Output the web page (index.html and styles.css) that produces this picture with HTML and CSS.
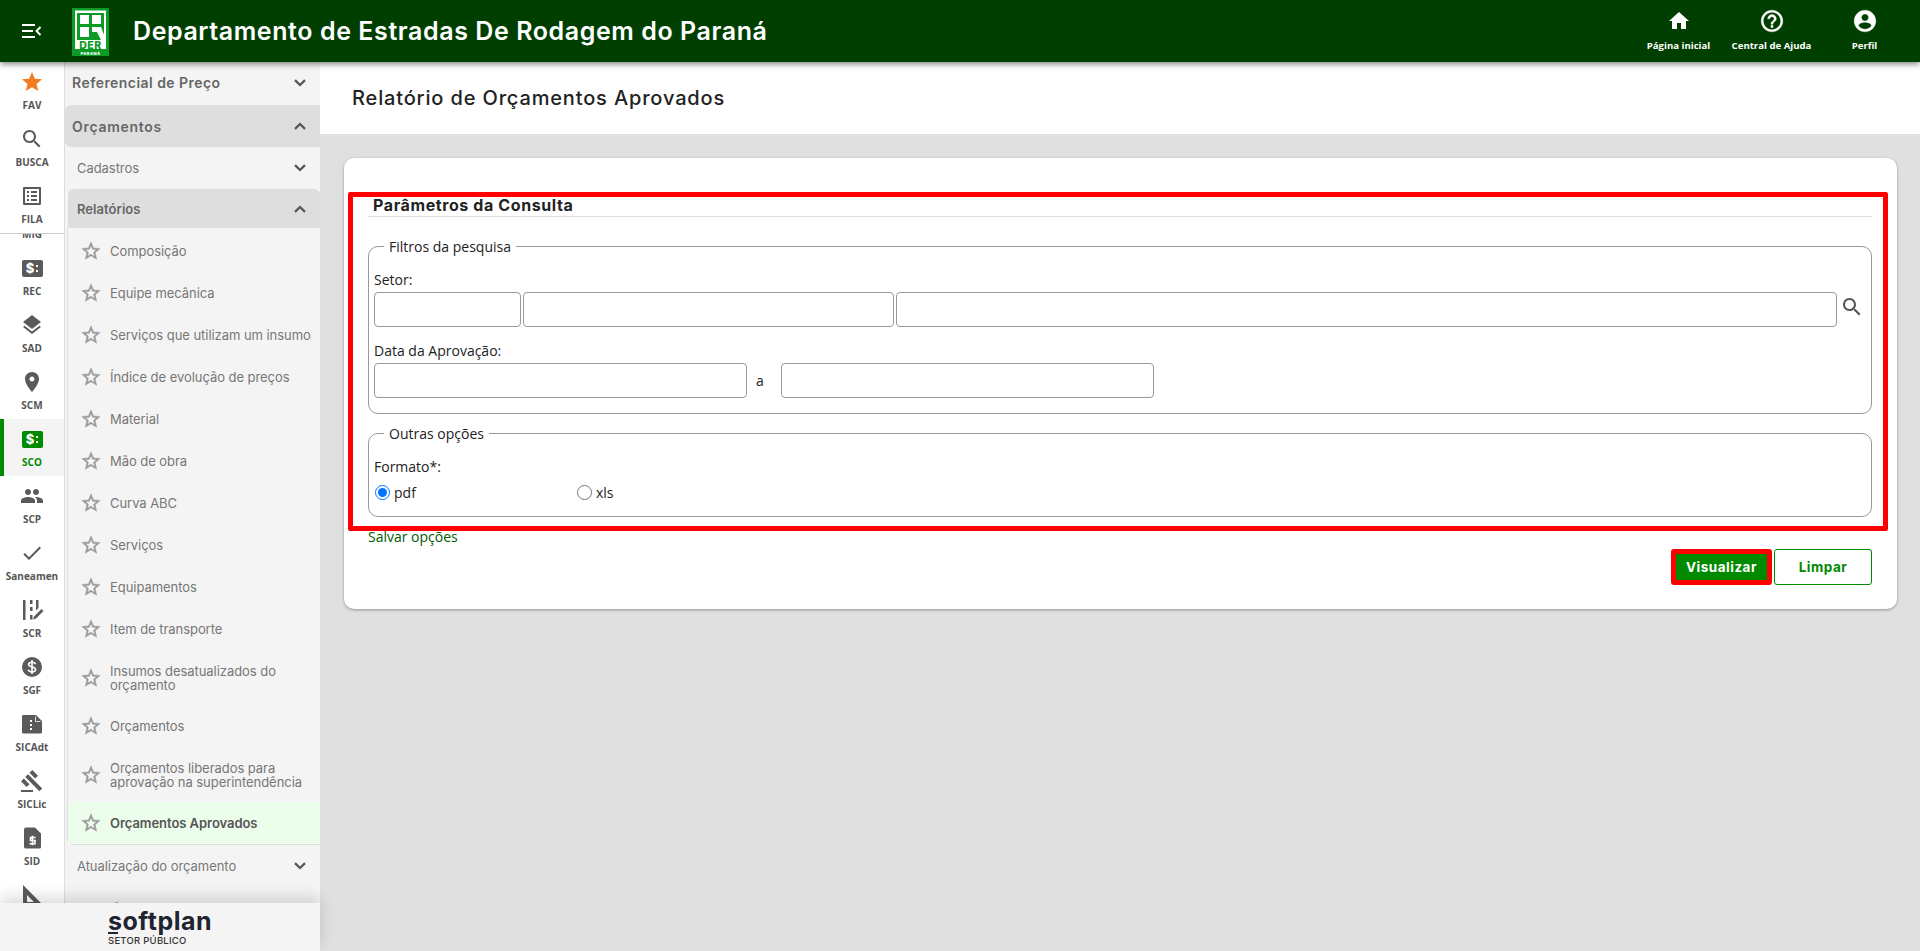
FILE: index.html
```html
<!DOCTYPE html>
<html lang="pt-BR">
<head>
<meta charset="utf-8">
<title>Relatório de Orçamentos Aprovados</title>
<link rel="stylesheet" href="styles.css">
</head>
<body>
<svg class="defs" width="0" height="0" aria-hidden="true">
  <symbol id="i-star" viewBox="0 0 24 24"><path d="M12 17.27L18.18 21l-1.64-7.03L22 9.24l-7.19-.61L12 2 9.19 8.63 2 9.24l5.46 4.73L5.82 21z"/></symbol>
  <symbol id="i-star-o" viewBox="0 0 24 24"><path d="M12,15.39L8.24,17.66L9.23,13.38L5.91,10.5L10.29,10.13L12,6.09L13.71,10.13L18.09,10.5L14.77,13.38L15.76,17.66M22,9.24L14.81,8.63L12,2L9.19,8.63L2,9.24L7.45,13.97L5.82,21L12,17.27L18.18,21L16.54,13.97L22,9.24Z"/></symbol>
  <symbol id="i-search" viewBox="0 0 24 24"><path d="M15.5 14h-.79l-.28-.27C15.41 12.59 16 11.11 16 9.5 16 5.91 13.09 3 9.5 3S3 5.91 3 9.5 5.91 16 9.5 16c1.61 0 3.09-.59 4.23-1.57l.27.28v.79l5 4.99L20.49 19l-4.99-5zm-6 0C7.01 14 5 11.99 5 9.5S7.01 5 9.5 5 14 7.01 14 9.5 11.99 14 9.5 14z"/></symbol>
  <symbol id="i-list" viewBox="0 0 24 24"><path d="M19 5v14H5V5h14m1.1-2H3.9c-.5 0-.9.4-.9.9v16.2c0 .4.4.9.9.9h16.2c.4 0 .9-.5.9-.9V3.9c0-.5-.5-.9-.9-.9zM11 7h6v2h-6V7zm0 4h6v2h-6v-2zm0 4h6v2h-6zM7 7h2v2H7zm0 4h2v2H7zm0 4h2v2H7z"/></symbol>
  <symbol id="i-layers" viewBox="0 0 24 24"><path d="M11.99 18.54l-7.37-5.73L3 14.07l9 7 9-7-1.63-1.27-7.38 5.74zM12 16l7.36-5.73L21 9l-9-7-9 7 1.63 1.27L12 16z"/></symbol>
  <symbol id="i-place" viewBox="0 0 24 24"><path d="M12 2C8.13 2 5 5.13 5 9c0 5.25 7 13 7 13s7-7.75 7-13c0-3.87-3.13-7-7-7zm0 9.5c-1.38 0-2.5-1.12-2.5-2.5s1.12-2.5 2.5-2.5 2.5 1.12 2.5 2.5-1.12 2.5-2.5 2.5z"/></symbol>
  <symbol id="i-people" viewBox="0 0 24 24"><path d="M16 11c1.66 0 2.99-1.34 2.99-3S17.66 5 16 5c-1.66 0-3 1.34-3 3s1.34 3 3 3zm-8 0c1.66 0 2.99-1.34 2.99-3S9.66 5 8 5C6.34 5 5 6.34 5 8s1.34 3 3 3zm0 2c-2.33 0-7 1.17-7 3.5V19h14v-2.5c0-2.33-4.67-3.5-7-3.5zm8 0c-.29 0-.62.02-.97.05 1.16.84 1.97 1.97 1.97 3.45V19h6v-2.5c0-2.33-4.67-3.5-7-3.5z"/></symbol>
  <symbol id="i-check" viewBox="0 0 24 24"><path d="M9 16.17L4.83 12l-1.42 1.41L9 19 21 7l-1.41-1.41z"/></symbol>
  <symbol id="i-money" viewBox="0 0 24 24"><circle cx="12" cy="12" r="10"/><path d="M15.500 9.200c-.3-1.200-1.500-1.900-3.500-1.900-2 0-3.400.9-3.400 2.300 0 3.200 7 1.600 7 4.900 0 1.400-1.500 2.300-3.600 2.300-2.200 0-3.500-.8-3.800-2.200M12 5v14" fill="none" stroke="#fff" stroke-width="1.600"/></symbol>
  <symbol id="i-gavel" viewBox="0 0 24 24"><path d="M1 21h12v2H1zM5.245 8.07l2.83-2.827 14.14 14.142-2.828 2.828zM12.317 1l5.657 5.656-2.83 2.83-5.654-5.66zM3.825 9.485l5.657 5.657-2.828 2.828-5.657-5.657z"/></symbol>
  <symbol id="i-doc-h" viewBox="0 0 24 24"><path fill-rule="evenodd" d="M4 3h12l6 6v11a1.500 1.500 0 0 1-1.500 1.500h-17A1.500 1.500 0 0 1 2 20V4.500A1.500 1.500 0 0 1 4 3zM10 8v2h2V8zm0 4v2h2v-2zm0 4v2h2v-2z"/><path d="M15.500 4.500v5h5" fill="none" stroke="#fff" stroke-width=".8"/></symbol>
  <symbol id="i-doc-s" viewBox="0 0 24 24"><path d="M6 1.500h9l6 6V21a1.500 1.500 0 0 1-1.500 1.500H6A2 2 0 0 1 4 21V3.500a2 2 0 0 1 2-2z"/><path d="M15.500 11.500h-5v3h4.500v3.300H9.500M12.500 9.800v9.500" fill="none" stroke="#fff" stroke-width="1.600"/></symbol>
  <symbol id="i-ruler" viewBox="0 0 24 24"><path fill-rule="evenodd" d="M3 2l19 19v2H3zM7 12v7h7z"/></symbol>
  <symbol id="i-scr" viewBox="0 0 24 24"><path d="M3 2h2.500v20H3zM10 2h2.500v4H10zM10 9h2.500v4H10zM10 17h2.500v4.500H10zM16 2h2.500v8L16 12.500zM21.500 11l2 2-7.500 7.500-3 1 1-3z"/></symbol>
  <symbol id="i-home" viewBox="0 0 24 24"><path d="M10 20v-6h4v6h5v-8h3L12 3 2 12h3v8z"/></symbol>
  <symbol id="i-help" viewBox="0 0 24 24"><path d="M11 18h2v-2h-2v2zm1-16C6.480 2 2 6.480 2 12s4.480 10 10 10 10-4.480 10-10S17.520 2 12 2zm0 18c-4.410 0-8-3.590-8-8s3.590-8 8-8 8 3.590 8 8-3.590 8-8 8zm0-14c-2.210 0-4 1.790-4 4h2c0-1.100.9-2 2-2s2 .9 2 2c0 2-3 1.750-3 5h2c0-2.250 3-2.500 3-5 0-2.210-1.790-4-4-4z"/></symbol>
  <symbol id="i-user" viewBox="0 0 24 24"><path d="M12 2C6.480 2 2 6.480 2 12s4.480 10 10 10 10-4.480 10-10S17.520 2 12 2zm0 3.500c1.900 0 3.300 1.500 3.300 3.300S13.900 12.100 12 12.100 8.700 10.600 8.700 8.800 10.100 5.500 12 5.500zm0 14c-2.500 0-4.710-1.280-6-3.220.03-1.990 4-3.080 6-3.080 1.990 0 5.970 1.090 6 3.080-1.290 1.940-3.500 3.220-6 3.220z"/></symbol>
  <symbol id="i-down" viewBox="0 0 12 8"><path d="M1 1.200l5 4.800 5-4.800" fill="none" stroke="currentColor" stroke-width="2.300"/></symbol>
  <symbol id="i-up" viewBox="0 0 12 8"><path d="M1 6.800l5-4.800 5 4.800" fill="none" stroke="currentColor" stroke-width="2.300"/></symbol>
</svg>

<header class="topbar">
  <button class="menu-btn" type="button" aria-label="Menu">
    <svg width="20" height="14" viewBox="0 0 20 14"><path d="M0 1h13M0 7h11M0 13h13" stroke="#fff" stroke-width="2" fill="none"/><path d="M18.500 3l-4 4 4 4" stroke="#fff" stroke-width="2" fill="none"/></svg>
  </button>
  <svg class="logo" width="37" height="48" viewBox="0 0 37 48" role="img" aria-label="DER Paraná">
    <rect width="37" height="48" fill="#0d9a25"/>
    <rect x="3" y="2.500" width="31" height="30" fill="#fff"/>
    <rect x="5" y="5" width="27" height="27" fill="#0d9a25"/>
    <rect x="8" y="7" width="9" height="9" fill="#fff"/>
    <rect x="20" y="7" width="9" height="9" fill="#fff"/>
    <rect x="8" y="19" width="9" height="10" fill="#fff"/>
    <path d="M20 19h9l5 13h-5l-4-8h-5z" fill="#fff"/>
    <rect x="3" y="32" width="31" height="9" fill="#fff"/>
    <text x="18.500" y="40.500" class="logo-der">DER</text>
    <text x="18.500" y="46.500" class="logo-pr">PARANÁ</text>
  </svg>
  <h1 class="app-title">Departamento de Estradas De Rodagem do Paraná</h1>
  <nav class="top-links">
    <a class="top-link"><svg class="top-ico"><use href="#i-home"/></svg><span>Página inicial</span></a>
    <a class="top-link"><svg class="top-ico top-ico-lg"><use href="#i-help"/></svg><span>Central de Ajuda</span></a>
    <a class="top-link"><svg class="top-ico top-ico-lg"><use href="#i-user"/></svg><span>Perfil</span></a>
  </nav>
</header>

<div class="shell">
  <aside class="rail">
    <div class="rail-fixed">
      <a class="rail-item"><svg class="rail-ico star-fav"><use href="#i-star"/></svg><span>FAV</span></a>
      <a class="rail-item"><svg class="rail-ico"><use href="#i-search"/></svg><span>BUSCA</span></a>
      <a class="rail-item"><svg class="rail-ico"><use href="#i-list"/></svg><span>FILA</span></a>
    </div>
    <div class="rail-scroll">
      <a class="rail-item rail-peek"><span class="rail-gap"></span><span>MIG</span></a>
      <a class="rail-item"><span class="money-ico"><b>$</b><i></i></span><span>REC</span></a>
      <a class="rail-item"><svg class="rail-ico"><use href="#i-layers"/></svg><span>SAD</span></a>
      <a class="rail-item"><svg class="rail-ico"><use href="#i-place"/></svg><span>SCM</span></a>
      <a class="rail-item is-active"><span class="money-ico"><b>$</b><i></i></span><span>SCO</span></a>
      <a class="rail-item"><svg class="rail-ico"><use href="#i-people"/></svg><span>SCP</span></a>
      <a class="rail-item"><svg class="rail-ico"><use href="#i-check"/></svg><span>Saneamen</span></a>
      <a class="rail-item"><svg class="rail-ico"><use href="#i-scr"/></svg><span>SCR</span></a>
      <a class="rail-item"><svg class="rail-ico"><use href="#i-money"/></svg><span>SGF</span></a>
      <a class="rail-item"><svg class="rail-ico"><use href="#i-doc-h"/></svg><span>SICAdt</span></a>
      <a class="rail-item"><svg class="rail-ico"><use href="#i-gavel"/></svg><span>SICLic</span></a>
      <a class="rail-item"><svg class="rail-ico"><use href="#i-doc-s"/></svg><span>SID</span></a>
      <a class="rail-item"><svg class="rail-ico"><use href="#i-ruler"/></svg><span>SIE</span></a>
    </div>
  </aside>

  <nav class="side">
    <div class="side-head side-first"><span>Referencial de Preço</span><svg class="chev"><use href="#i-down"/></svg></div>
    <div class="side-head is-open"><span>Orçamentos</span><svg class="chev"><use href="#i-up"/></svg></div>
    <div class="side-sub"><span>Cadastros</span><svg class="chev"><use href="#i-down"/></svg></div>
    <div class="side-sub is-open"><span>Relatórios</span><svg class="chev"><use href="#i-up"/></svg></div>
    <ul class="side-list">
      <li class="side-link"><svg class="star-o"><use href="#i-star-o"/></svg><span>Composição</span></li>
      <li class="side-link"><svg class="star-o"><use href="#i-star-o"/></svg><span>Equipe mecânica</span></li>
      <li class="side-link"><svg class="star-o"><use href="#i-star-o"/></svg><span>Serviços que utilizam um insumo</span></li>
      <li class="side-link"><svg class="star-o"><use href="#i-star-o"/></svg><span>Índice de evolução de preços</span></li>
      <li class="side-link"><svg class="star-o"><use href="#i-star-o"/></svg><span>Material</span></li>
      <li class="side-link"><svg class="star-o"><use href="#i-star-o"/></svg><span>Mão de obra</span></li>
      <li class="side-link"><svg class="star-o"><use href="#i-star-o"/></svg><span>Curva ABC</span></li>
      <li class="side-link"><svg class="star-o"><use href="#i-star-o"/></svg><span>Serviços</span></li>
      <li class="side-link"><svg class="star-o"><use href="#i-star-o"/></svg><span>Equipamentos</span></li>
      <li class="side-link"><svg class="star-o"><use href="#i-star-o"/></svg><span>Item de transporte</span></li>
      <li class="side-link is-double"><svg class="star-o"><use href="#i-star-o"/></svg><span>Insumos desatualizados do<br>orçamento</span></li>
      <li class="side-link"><svg class="star-o"><use href="#i-star-o"/></svg><span>Orçamentos</span></li>
      <li class="side-link is-double"><svg class="star-o"><use href="#i-star-o"/></svg><span>Orçamentos liberados para<br>aprovação na superintendência</span></li>
      <li class="side-link is-current"><svg class="star-o"><use href="#i-star-o"/></svg><span>Orçamentos Aprovados</span></li>
    </ul>
    <div class="side-sub"><span>Atualização do orçamento</span><svg class="chev"><use href="#i-down"/></svg></div>
    <div class="side-sub"><span>Cotação</span></div>
  </nav>

  <main class="main">
    <div class="page-head"><h2 class="page-title">Relatório de Orçamentos Aprovados</h2></div>
    <div class="page-body">
      <section class="card">
        <div class="highlight">
          <h3 class="section-title">Parâmetros da Consulta</h3>
          <fieldset class="group group-first">
            <legend>Filtros da pesquisa</legend>
            <label class="field-label">Setor:</label>
            <div class="input-row">
              <input class="input input-code" type="text">
              <input class="input input-mid" type="text">
              <input class="input input-wide" type="text">
              <svg class="lookup"><use href="#i-search"/></svg>
            </div>
            <label class="field-label field-next">Data da Aprovação:</label>
            <div class="input-row">
              <input class="input input-date" type="text">
              <span class="range-sep">a</span>
              <input class="input input-date" type="text">
            </div>
          </fieldset>
          <fieldset class="group group-second">
            <legend>Outras opções</legend>
            <label class="field-label">Formato*:</label>
            <div class="radio-row">
              <label class="radio radio-pdf"><input type="radio" name="fmt" checked><span>pdf</span></label>
              <label class="radio"><input type="radio" name="fmt"><span>xls</span></label>
            </div>
          </fieldset>
        </div>
        <a class="save-link">Salvar opções</a>
        <div class="actions">
          <button class="btn btn-primary" type="button">Visualizar</button>
          <button class="btn btn-ghost" type="button">Limpar</button>
        </div>
      </section>
    </div>
  </main>
</div>

<footer class="brand">
  <div class="brand-name">softplan</div>
  <div class="brand-sub">SETOR PÚBLICO</div>
</footer>
</body>
</html>
```

FILE: styles.css
```css
* { box-sizing: border-box; }
html, body { margin: 0; height: 951px; overflow: hidden; }
body { font-family: "Open Sans", "Liberation Sans", sans-serif; background: #e0e0e0; color: #222; position: relative; display: flex; flex-direction: column; }
.defs { position: absolute; }
h1, h2, h3 { margin: 0; }

.topbar { height: 62px; flex: none; background: #003f00; display: flex; align-items: center; box-shadow: 0 2px 6px rgba(0,0,0,.5); position: relative; z-index: 3; color: #fff; }
.menu-btn { width: 64px; height: 62px; padding: 0 0 1px 0; background: none; border: 0; display: flex; align-items: center; justify-content: center; }
.logo { margin: 1px 0 0 8px; flex: none; }
.logo-der { font: 800 10.500px "Inter", sans-serif; fill: #0d9a25; text-anchor: middle; letter-spacing: .6px; }
.logo-pr { font: 800 4px "Inter", sans-serif; fill: #fff; text-anchor: middle; letter-spacing: .5px; }
.app-title { font: 600 25px "Inter", sans-serif; letter-spacing: .58px; margin-left: 24px; white-space: nowrap; }
.top-links { margin-left: auto; display: flex; padding-right: 9px; }
.top-link { width: 93px; height: 44px; display: flex; flex-direction: column; align-items: center; font: 700 9.600px/14px "Open Sans", sans-serif; color: #fff; white-space: nowrap; }
.top-ico { width: 24px; height: 24px; fill: #fff; margin-bottom: 6px; flex: none; }
.top-ico-lg { width: 26px; height: 26px; margin: -1px 0 5px; stroke: #fff; stroke-width: .3px; }

.shell { flex: 1; min-height: 0; display: flex; }

.rail { width: 65px; flex: none; background: #fff; border-right: 1px solid #ddd; overflow: hidden; display: flex; flex-direction: column; }
.rail-fixed { height: 172px; flex: none; border-bottom: 1px solid #ccc; }
.rail-scroll { flex: 1; min-height: 0; overflow: hidden; }
.rail-peek { margin-top: -43px; }
.rail-gap { height: 24px; flex: none; }
.rail-item { height: 57px; padding-top: 8px; display: flex; flex-direction: column; align-items: center; font: 700 10px/14px "Open Sans", sans-serif; color: #555; white-space: nowrap; }
.rail-item > span:last-child { margin-top: 4px; }
.rail-ico { width: 24px; height: 24px; fill: #5a5a5a; flex: none; }
.star-fav { fill: #f57c1f; }
.money-ico { width: 21px; height: 17px; margin: 4px 0 3px; border-radius: 2px; background: #5a5a5a; color: #fff; display: flex; align-items: center; justify-content: center; gap: 2px; flex: none; }
.money-ico b { font: 800 13px/17px "Inter", sans-serif; }
.money-ico i { width: 2px; height: 7px; border-top: 2px solid #fff; border-bottom: 2px solid #fff; }
.rail-item.is-active { background: #f4f4f4; border-left: 4px solid #008a00; color: #008a00; padding-right: 4px; }
.is-active .money-ico { background: #008a00; }

.side { width: 255px; flex: none; background: #f4f4f4; overflow: hidden; font-family: "Inter", sans-serif; color: #777; }
.side-head, .side-sub { display: flex; align-items: center; justify-content: space-between; padding-right: 14px; }
.side-head { height: 43px; padding-left: 7px; font-weight: 600; font-size: 14px; letter-spacing: .45px; color: #666; }
.side-first { padding-bottom: 2px; }
.side-head.is-open { height: 42px; background: #dedede; border-radius: 6px 0 0 6px; letter-spacing: .7px; }
.side-sub { height: 42px; padding-left: 12px; font-size: 13px; letter-spacing: -.05px; color: #777; }
.side-sub.is-open { height: 39px; margin-left: 3px; padding-left: 9px; background: #dedede; border-radius: 6px 6px 0 0; font-weight: 600; color: #666; letter-spacing: .05px; }
.chev { width: 12px; height: 8px; color: #555; }
.side-list { list-style: none; margin: 0 0 0 2px; padding: 2px 0 0; border-left: 1px solid #ddd; border-bottom: 1px solid #ddd; border-radius: 0 0 0 6px; }
.side-link { height: 42px; display: flex; align-items: center; padding-left: 12px; font-size: 13px; letter-spacing: -.05px; line-height: 14px; }
.side-link.is-double { height: 55px; }
.side-link.is-current { background: #ecfdec; font-weight: 600; color: #555; }
.star-o { width: 22px; height: 22px; fill: #9a9a9a; stroke: #9a9a9a; stroke-width: .5px; margin-right: 8px; flex: none; }

.main { flex: 1; min-width: 0; display: flex; flex-direction: column; }
.page-head { height: 72px; flex: none; background: #fff; display: flex; align-items: center; padding-left: 32px; }
.page-title { font: 500 20px "Inter", sans-serif; letter-spacing: .85px; color: #222; }
.page-body { flex: 1; padding: 24px 23px 0 24px; }
.card { height: 451px; background: #fff; border-radius: 10px; box-shadow: 0 1px 3px rgba(0,0,0,.35); padding: 34px 9px 0 4px; }
.highlight { height: 339px; border: 5px solid #f00; border-radius: 2px; padding: 0 11px 0 15px; }
.section-title { height: 20px; font: 700 16px/17px "Inter", sans-serif; letter-spacing: .6px; color: #222; padding-left: 5px; border-bottom: 1px solid #ddd; }

.group { margin: 20px 0 0; border: 1px solid #999; border-radius: 10px; padding: 0 5px; min-width: 0; }
.group-second { margin-top: 10px; padding-bottom: 14px; }
.group-first { padding-bottom: 15px; }
.group legend { margin-left: 10px; padding: 0 5px; font-size: 14px; line-height: 19px; color: #222; }
.field-label { display: block; font-size: 14px; line-height: 19px; margin: 14px 0 3px; color: #222; }
.field-next { margin-top: 14px; }
.group-second .field-label { margin-top: 14px; margin-bottom: 6px; }
.input-row { display: flex; align-items: center; gap: 2px; }
.input { height: 35px; border: 1px solid #999; border-radius: 4px; background: #fff; padding: 0 6px; margin: 0; flex: none; }
.input-code { width: 147px; }
.input-mid { width: 371px; }
.input-wide { width: 941px; }
.input-date { width: 373px; }
.lookup { width: 24px; height: 24px; fill: #555; margin: -5px 0 0 1px; flex: none; }
.range-sep { width: 30px; padding-left: 7px; font-size: 14px; }
.radio-row { display: flex; height: 20px; align-items: center; }
.radio { display: flex; align-items: center; gap: 4px; font-size: 14px; color: #222; }
.radio input { width: 15px; height: 15px; margin: 0 0 0 1px; }
.radio-pdf { width: 202px; }

.save-link { display: block; margin: -4px 0 0 20px; font-size: 14px; line-height: 19px; color: #005a00; position: relative; }
.actions { display: flex; justify-content: flex-end; gap: 2px; margin-top: 3px; padding-right: 16px; }
.btn { height: 36px; font: 700 13.500px "Inter", sans-serif; letter-spacing: .5px; border-radius: 3px; padding: 0; }
.btn-primary { width: 101px; background: #008a00; color: #fff; border: 5px solid #f00; }
.btn-ghost { width: 98px; background: #fff; color: #008a00; border: 1px solid #008a00; }

.brand { position: absolute; left: 0; bottom: 0; width: 320px; height: 48px; background: #f4f4f4; box-shadow: 0 -6px 14px rgba(0,0,0,.14); padding: 5px 0 0 108px; z-index: 2; color: #1e2430; }
.brand-name { font: 700 25px/26px "Inter", sans-serif; letter-spacing: .5px; position: relative; }
.brand-name::after { content: ""; position: absolute; left: 0; bottom: 0; width: 10px; height: 2px; background: #1e2430; }
.brand-sub { font: 500 9.500px/12px "Inter", sans-serif; letter-spacing: .25px; margin-top: 1px; color: #333; }
```
